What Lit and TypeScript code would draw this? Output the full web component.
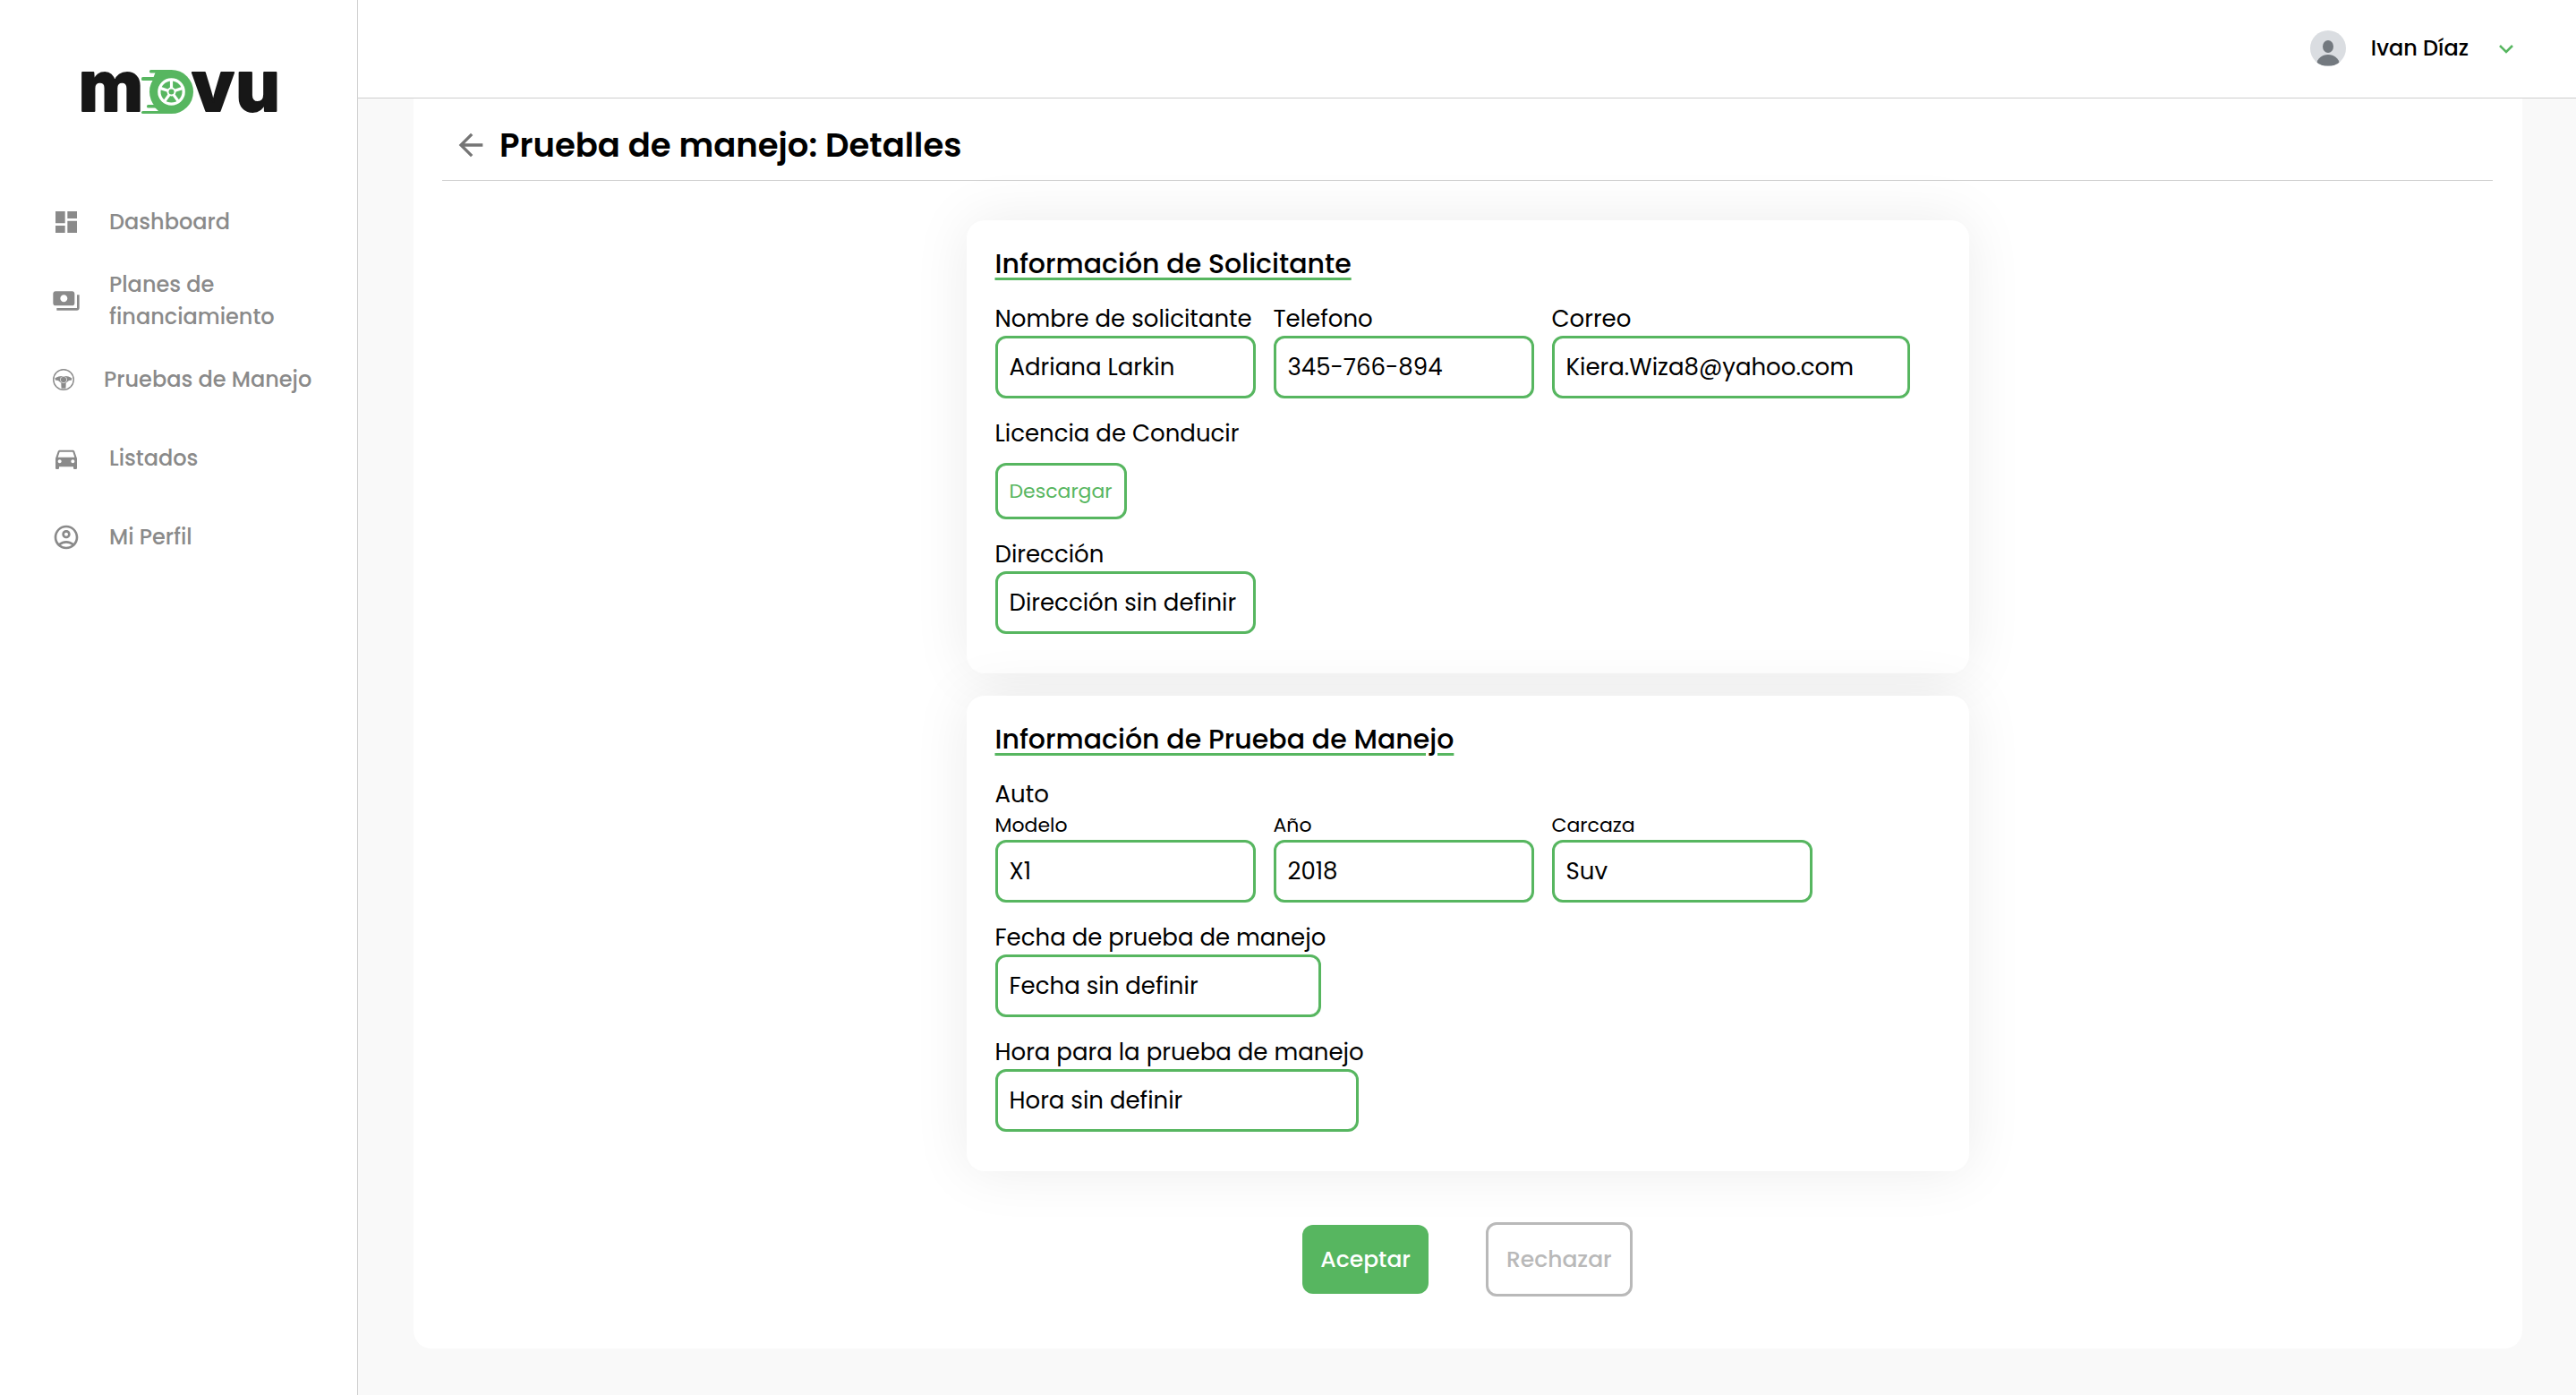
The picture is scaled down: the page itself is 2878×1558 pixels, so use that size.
import { LitElement, html, css, svg } from "lit";
import { customElement, property } from "lit/decorators.js";

const icons = {
  dashboard: svg`<path d="M3 13h8V3H3v10zm0 8h8v-6H3v6zm10 0h8V11h-8v10zm0-18v6h8V3h-8z"/>`,
  payments: svg`<path d="M19 14V6c0-1.1-.9-2-2-2H3c-1.1 0-2 .9-2 2v8c0 1.1.9 2 2 2h14c1.1 0 2-.9 2-2zm-9-1c-1.66 0-3-1.34-3-3s1.34-3 3-3 3 1.34 3 3-1.34 3-3 3zm13-6v11c0 1.1-.9 2-2 2H4v-2h17V7h2z"/>`,
  wheel: svg`
    <circle cx="12" cy="12" r="10.4" fill="none" stroke="currentColor" stroke-width="1.3"/>
    <path d="M3 10.6C6 9 8.4 8.4 9.6 8.4h4.800c1.200 0 3.600.6 6.200 2.200l-.4 2c-1.600 0-3.200.4-4 1.400l-1.700 1.400-.2 5.400c-1.400.4-3.200.4-4.600 0l-.2-5.400-1.700-1.400c-.8-1-2.400-1.400-4-1.400z"/>
    <circle cx="12" cy="12" r="3.4" fill="currentColor" stroke="#fff" stroke-width="0.6"/>`,
  car: svg`<path d="M18.92 6.01C18.72 5.42 18.16 5 17.5 5h-11c-.66 0-1.21.42-1.42 1.01L3 12v8c0 .55.45 1 1 1h1c.55 0 1-.45 1-1v-1h12v1c0 .55.45 1 1 1h1c.55 0 1-.45 1-1v-8l-2.08-5.99zM6.5 16c-.83 0-1.5-.67-1.5-1.5S5.67 13 6.5 13s1.5.67 1.5 1.5S7.33 16 6.5 16zm11 0c-.83 0-1.5-.67-1.5-1.5s.67-1.5 1.5-1.5 1.5.67 1.5 1.5-.67 1.5-1.5 1.5zM5 11l1.5-4.5h11L19 11H5z"/>`,
  account: svg`<path d="M12 2C6.48 2 2 6.48 2 12s4.48 10 10 10 10-4.48 10-10S17.52 2 12 2zM7.35 18.5C8.66 17.56 10.26 17 12 17s3.34.56 4.65 1.5c-1.31.94-2.91 1.5-4.65 1.5s-3.34-.56-4.65-1.5zm10.79-1.38C16.45 15.8 14.32 15 12 15s-4.45.8-6.14 2.12C4.7 15.73 4 13.95 4 12c0-4.42 3.58-8 8-8s8 3.58 8 8c0 1.95-.7 3.73-1.86 5.12z"/><path d="M12 6c-1.93 0-3.5 1.57-3.5 3.5S10.07 13 12 13s3.5-1.57 3.5-3.5S13.93 6 12 6zm0 5c-.83 0-1.5-.67-1.5-1.5S11.17 8 12 8s1.5.67 1.5 1.5S12.83 11 12 11z"/>`,
};

const base = css`
  * {
    box-sizing: border-box;
  }
  button,
  input {
    font: inherit;
    margin: 0;
  }
`;

@customElement("movu-logo")
class MovuLogo extends LitElement {
  static styles = css`
    :host {
      display: block;
      line-height: 0;
    }
    .word {
      font-family: Inter, sans-serif;
      font-weight: 800;
      font-size: 78px;
      text-anchor: middle;
      fill: #171717;
      stroke: #171717;
      stroke-width: 2px;
      stroke-linejoin: round;
    }
  `;
  render() {
    const spokes = [0, 72, 144, 216, 288];
    return html`
      <svg width="232" height="104" viewBox="-4 -32 232 104" role="img" aria-label="movu">
        <g fill="#57b660">
          <circle cx="101.5" cy="25.5" r="24.5" />
          <rect x="77" y="1" width="25" height="3.5" rx="1.5" />
          <path d="M84 3h18v10H80z" />
          <rect x="68" y="9" width="24" height="4" rx="1.5" />
          <rect x="74" y="40" width="20" height="3.5" rx="1.5" />
          <path d="M82 42h20v8H90z" />
          <rect x="68" y="47" width="34" height="3" rx="1.5" />
        </g>
        <circle cx="101.5" cy="25.5" r="15.3" fill="#fff" />
        <circle cx="101.5" cy="25.5" r="12" fill="#57b660" />
        <g stroke="#fff" stroke-width="3.2">
          ${spokes.map(
            (a) => svg`<line x1="101.5" y1="25.5" x2="101.5" y2="13" transform="rotate(${a} 101.5 25.5)"/>`,
          )}
        </g>
        <circle cx="101.5" cy="25.5" r="5" fill="#fff" />
        <circle cx="101.5" cy="25.5" r="3" fill="#57b660" />
        <text class="word" x="34" y="47">m</text>
        <text class="word" x="148" y="47">v</text>
        <text class="word" x="198" y="47">u</text>
      </svg>
    `;
  }
}

@customElement("side-nav")
class SideNav extends LitElement {
  static styles = [
    base,
    css`
      :host {
        display: block;
        background: #fff;
        border-right: 1px solid #cfcfcf;
      }
      .logo {
        padding: 45px 0 0 86px;
      }
      .list {
        list-style: none;
        margin: 0;
        padding: 55px 40px 0 58px;
      }
      .link {
        display: flex;
        align-items: center;
        gap: 32px;
        min-height: 88px;
        color: #8a8a8a;
        text-decoration: none;
        font-size: 24px;
        font-weight: 500;
        line-height: 36px;
      }
      .icon {
        flex: none;
        width: 32px;
        height: 32px;
        fill: currentColor;
      }
      .small {
        width: 26px;
        height: 26px;
      }
    `,
  ];
  private items = [
    { label: "Dashboard", icon: icons.dashboard },
    { label: "Planes de financiamiento", icon: icons.payments },
    { label: "Pruebas de Manejo", icon: icons.wheel, small: true },
    { label: "Listados", icon: icons.car },
    { label: "Mi Perfil", icon: icons.account },
  ];
  render() {
    return html`
      <div class="logo"><movu-logo></movu-logo></div>
      <nav>
        <ul class="list">
          ${this.items.map(
            (i) => html`<li>
              <a class="link" href="#">
                <svg class="icon ${i.small ? "small" : ""}" viewBox="0 0 24 24" aria-hidden="true">${i.icon}</svg>
                <span>${i.label}</span>
              </a>
            </li>`,
          )}
        </ul>
      </nav>
    `;
  }
}

@customElement("top-bar")
class TopBar extends LitElement {
  static styles = [
    base,
    css`
      :host {
        display: block;
        background: #fff;
        border-bottom: 1px solid #cfcfcf;
      }
      .bar {
        display: flex;
        justify-content: flex-end;
        padding: 34px 64px 35px;
      }
      .user {
        display: flex;
        align-items: center;
        padding: 0;
        border: 0;
        background: none;
        color: #000;
        font-size: 24px;
        font-weight: 500;
        line-height: 36px;
      }
      .name {
        margin: 0 28px;
      }
    `,
  ];
  render() {
    return html`
      <header class="bar">
        <button class="user" type="button">
          <svg width="40" height="40" viewBox="0 0 40 40" aria-hidden="true">
            <clipPath id="round"><circle cx="20" cy="20" r="20" /></clipPath>
            <g clip-path="url(#round)">
              <rect width="40" height="40" fill="#dadde1" />
              <ellipse cx="20" cy="18" rx="6" ry="7" fill="#73797f" />
              <path d="M7 38c1-7 6-11 13-11s12 4 13 11c-7 2-19 2-26 0z" fill="#73797f" />
            </g>
          </svg>
          <span class="name">Ivan Díaz</span>
          <svg width="28" height="28" viewBox="0 0 28 28" fill="none" stroke="#57b660" stroke-width="2.6" aria-hidden="true">
            <path d="M7 11l7 7 7-7" />
          </svg>
        </button>
      </header>
    `;
  }
}

@customElement("text-field")
class TextField extends LitElement {
  @property() label = "";
  @property() value = "";
  @property({ type: Boolean }) compact = false;

  static styles = [
    base,
    css`
      :host {
        display: block;
      }
      .label {
        display: block;
        line-height: 38px;
        white-space: nowrap;
      }
      .compact {
        font-size: 22px;
        line-height: 32px;
      }
      .input {
        display: block;
        width: 100%;
        height: 70px;
        padding: 0 13px;
        border: 3px solid #57b660;
        border-radius: 12px;
        background: transparent;
        color: #000;
        outline: none;
      }
    `,
  ];
  render() {
    return html`
      <label class="label ${this.compact ? "compact" : ""}" for="field">${this.label}</label>
      <input class="input" id="field" type="text" readonly .value=${this.value} />
    `;
  }
}

@customElement("app-root")
class AppRoot extends LitElement {
  static styles = [
    base,
    css`
      :host {
        display: grid;
        grid-template-columns: 400px minmax(0, 1fr);
        min-height: 100vh;
        background: #f9f9f9;
        color: #000;
        font-family: Poppins, Inter, sans-serif;
        font-size: 26px;
      }
      .panel {
        margin: 0 60px 52px 62px;
        padding: 0 33px 58px 32px;
        background: #fff;
        border-radius: 0 0 20px 20px;
      }
      .title-row {
        display: flex;
        align-items: center;
        gap: 12px;
        padding: 26px 0 13px 12px;
        border-bottom: 1px solid #cfcfcf;
      }
      .back {
        display: flex;
        padding: 0;
        border: 0;
        background: none;
        color: #757575;
      }
      .title {
        margin: 0;
        font-size: 37px;
        font-weight: 600;
        line-height: 52px;
      }
      .cards {
        display: grid;
        gap: 25px;
        max-width: 1120px;
        margin: 44px auto 57px;
      }
      .card {
        display: flex;
        flex-direction: column;
        align-items: flex-start;
        gap: 20px;
        padding: 30px 32px 44px;
        background: #fff;
        border-radius: 20px;
        box-shadow: 0 0 64px rgba(0, 0, 0, 0.08);
      }
      .heading {
        margin: 0 0 3px;
        font-size: 30px;
        font-weight: 500;
        line-height: 38px;
        text-decoration: underline #57b660 3px;
        text-underline-offset: 5px;
      }
      .row {
        display: flex;
        gap: 20px;
      }
      .caption {
        margin: 0;
        line-height: 38px;
      }
      .w-s {
        width: 291px;
      }
      .w-m {
        width: 364px;
      }
      .w-l {
        width: 400px;
      }
      .w-xl {
        width: 406px;
      }
      .download {
        display: block;
        margin-top: 14px;
        padding: 13px;
        border: 3px solid #57b660;
        border-radius: 12px;
        background: transparent;
        color: #57b660;
        font-size: 22px;
        line-height: 31px;
      }
      .actions {
        display: flex;
        align-items: center;
        justify-content: center;
        gap: 64px;
      }
      .action {
        border: 0;
        border-radius: 12px;
        font-size: 25px;
        font-weight: 500;
        line-height: 37px;
        padding: 20px;
      }
      .accept {
        background: #57b660;
        color: #fff;
      }
      .reject {
        border: 3px solid #b9b9b9;
        background: transparent;
        color: #b9b9b9;
      }
    `,
  ];
  render() {
    return html`
      <side-nav></side-nav>
      <div>
        <top-bar></top-bar>
        <main class="panel">
          <div class="title-row">
            <button class="back" type="button" aria-label="Volver">
              <svg width="40" height="40" viewBox="0 0 24 24" fill="currentColor" aria-hidden="true">
                <path d="M20 11H7.83l5.59-5.59L12 4l-8 8 8 8 1.41-1.41L7.83 13H20v-2z" />
              </svg>
            </button>
            <h1 class="title">Prueba de manejo: Detalles</h1>
          </div>
          <div class="cards">
            <section class="card">
              <h2 class="heading">Información de Solicitante</h2>
              <div class="row">
                <text-field class="w-s" label="Nombre de solicitante" value="Adriana Larkin"></text-field>
                <text-field class="w-s" label="Telefono" value="345-766-894"></text-field>
                <text-field class="w-l" label="Correo" value="Kiera.Wiza8@yahoo.com"></text-field>
              </div>
              <div>
                <p class="caption">Licencia de Conducir</p>
                <button class="download" type="button">Descargar</button>
              </div>
              <text-field class="w-s" label="Dirección" value="Dirección sin definir"></text-field>
            </section>
            <section class="card">
              <h2 class="heading">Información de Prueba de Manejo</h2>
              <div>
                <p class="caption">Auto</p>
                <div class="row">
                  <text-field compact class="w-s" label="Modelo" value="X1"></text-field>
                  <text-field compact class="w-s" label="Año" value="2018"></text-field>
                  <text-field compact class="w-s" label="Carcaza" value="Suv"></text-field>
                </div>
              </div>
              <text-field class="w-m" label="Fecha de prueba de manejo" value="Fecha sin definir"></text-field>
              <text-field class="w-xl" label="Hora para la prueba de manejo" value="Hora sin definir"></text-field>
            </section>
          </div>
          <div class="actions">
            <button class="action accept" type="button">Aceptar</button>
            <button class="action reject" type="button">Rechazar</button>
          </div>
        </main>
      </div>
    `;
  }
}
